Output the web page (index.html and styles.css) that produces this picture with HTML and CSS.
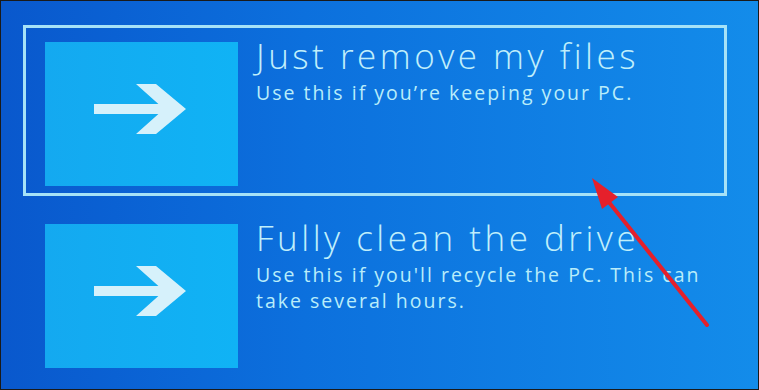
FILE: index.html
```html
<!DOCTYPE html>
<html lang="en">
<head>
    <meta charset="UTF-8">
    <meta name="viewport" content="width=device-width, initial-scale=1.0">
    <title>Reset this PC</title>
    <link rel="stylesheet" href="styles.css">
</head>
<body>
    <div class="screen">
        <div class="option selected">
            <div class="tile">
                <svg class="tile-arrow" viewBox="0 0 100 60" width="100" height="60">
                    <polygon points="0,20 75,20 75,30 0,30" fill="#d6f1fb"/>
                    <polygon points="42,0 62,0 92,25 62,50 42,50 70,25" fill="#d6f1fb"/>
                </svg>
            </div>
            <div class="text">
                <h1>Just remove my files</h1>
                <p>Use this if you’re keeping your PC.</p>
            </div>
        </div>
        <div class="option">
            <div class="tile">
                <svg class="tile-arrow" viewBox="0 0 100 60" width="100" height="60">
                    <polygon points="0,20 75,20 75,30 0,30" fill="#d6f1fb"/>
                    <polygon points="42,0 62,0 92,25 62,50 42,50 70,25" fill="#d6f1fb"/>
                </svg>
            </div>
            <div class="text">
                <h1>Fully clean the drive</h1>
                <p>Use this if you'll recycle the PC. This can take several hours.</p>
            </div>
        </div>

        <svg class="callout" width="759" height="390" viewBox="0 0 759 390">
            <line x1="707" y1="325" x2="604" y2="196" stroke="#e5202b" stroke-width="4" stroke-linecap="round"/>
            <polygon points="592,178 618,197 602,209" fill="#e5202b"/>
        </svg>
    </div>
</body>
</html>
```

FILE: styles.css
```css
body {
    margin: 0;
    padding: 0;
    background: #000;
}
.screen {
    position: relative;
    box-sizing: border-box;
    width: 759px;
    height: 390px;
    border: 1px solid #1a1a1a;
    background: linear-gradient(90deg, #0958cd 0%, #0c70dd 40%, #138cea 100%);
    padding: 24px 0 0 22px;
    font-family: 'Open Sans', 'Noto Sans', sans-serif;
    color: #b9edfa;
    overflow: hidden;
}
.option {
    display: flex;
    width: 704px;
    height: 171px;
    box-sizing: border-box;
    border: 3px solid transparent;
    padding: 14px 0 0 19px;
    margin-bottom: 11px;
}
.option.selected {
    border-color: #a6e2f7;
}
.tile {
    flex: none;
    width: 193px;
    height: 144px;
    background: linear-gradient(90deg, #14a9f0, #10b3f5);
    display: flex;
    align-items: center;
    justify-content: center;
}
.tile-arrow {
    margin-left: 4px;
}
.text {
    margin-left: 18px;
    width: 452px;
}
h1 {
    margin: -8px 0 0 0;
    font-size: 35px;
    font-weight: 300;
    letter-spacing: 3.5px;
    line-height: 44px;
    color: #c0effb;
    white-space: nowrap;
}
p {
    margin: 2px 0 0 0;
    font-size: 19.5px;
    font-weight: 500;
    letter-spacing: 2px;
    line-height: 26px;
}
.callout {
    position: absolute;
    left: -1px;
    top: -1px;
}
```
